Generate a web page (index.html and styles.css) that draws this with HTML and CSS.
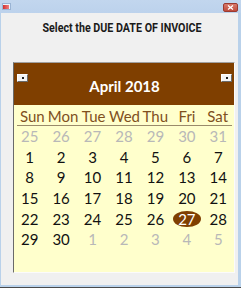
FILE: index.html
```html
<!DOCTYPE html>
<html>
<head>
<meta charset="utf-8">
<link rel="stylesheet" href="styles.css">
</head>
<body>
<div class="window">
  <div class="titlebar">
    <span class="app-icon"><span class="app-icon-bar"></span></span>
    <span class="close-btn"><svg width="7" height="5" viewBox="0 0 7 5"><path d="M1 0.5L6 4.5M6 0.5L1 4.5" stroke="#fff" stroke-width="1.3"/></svg></span>
  </div>
  <div class="client">
    <div class="heading"><span class="heading-text">Select the DUE DATE OF INVOICE</span></div>
    <div class="calendar">
      <div class="cal-head">
        <span class="nav-btn"><span class="nav-dot"></span></span>
        <span class="month">April 2018</span>
        <span class="nav-btn"><span class="nav-dot"></span></span>
      </div>
      <div class="cal-body">
        <div class="dow">
          <span>Sun</span><span>Mon</span><span>Tue</span><span>Wed</span><span>Thu</span><span>Fri</span><span>Sat</span>
        </div>
        <div class="days">
          <span class="other">25</span><span class="other">26</span><span class="other">27</span><span class="other">28</span><span class="other">29</span><span class="other">30</span><span class="other">31</span>
          <span>1</span><span>2</span><span>3</span><span>4</span><span>5</span><span>6</span><span>7</span>
          <span>8</span><span>9</span><span>10</span><span>11</span><span>12</span><span>13</span><span>14</span>
          <span>15</span><span>16</span><span>17</span><span>18</span><span>19</span><span>20</span><span>21</span>
          <span>22</span><span>23</span><span>24</span><span>25</span><span>26</span><span><b class="sel">27</b></span><span>28</span>
          <span>29</span><span>30</span><span class="other">1</span><span class="other">2</span><span class="other">3</span><span class="other">4</span><span class="other">5</span>
        </div>
      </div>
    </div>
  </div>
</div>
</body>
</html>
```

FILE: styles.css
```css
html, body {
  margin: 0;
  padding: 0;
  background: #f0f0f0;
}
.window {
  width: 241px;
  height: 288px;
  box-sizing: border-box;
  display: flex;
  flex-direction: column;
  background: #b9d1ea;
  border-bottom: 1px solid #4a4a4a;
}
.titlebar {
  height: 13px;
  flex: none;
  position: relative;
  background: linear-gradient(#c2d6ee, #bcd2ec);
  display: flex;
  align-items: center;
  justify-content: space-between;
  padding: 0 3px 0 2px;
}
.app-icon {
  width: 9px;
  height: 7px;
  background: #eef3fa;
  border: 1px solid #9ab4d4;
  box-sizing: border-box;
  display: flex;
  align-items: flex-end;
}
.app-icon-bar {
  width: 6px;
  height: 4px;
  background: linear-gradient(90deg, #d03030, #f08080);
}
.close-btn {
  width: 15px;
  height: 9px;
  margin-top: 1px;
  background: linear-gradient(#d87a6c, #c04b3c);
  border: 1px solid #9b3a30;
  border-radius: 2px;
  box-sizing: border-box;
  display: flex;
  align-items: center;
  justify-content: center;
}
.client {
  flex: 1;
  margin: 0 3px 2px 1px;
  background: #f0f0f0;
  display: flex;
  flex-direction: column;
}
.heading {
  font-family: Roboto, "Liberation Sans", sans-serif;
  font-weight: 700;
  font-size: 12.5px;
  color: #1a1a1a;
  text-align: center;
  height: 15px;
  line-height: 15px;
  margin-top: 7px;
  padding-left: 5px;
  white-space: nowrap;
}
.heading-text {
  display: inline-block;
  transform: scaleX(0.855);
}
.calendar {
  margin: 27px 0 0 12px;
  width: 222px;
  height: 211px;
  box-sizing: border-box;
  border-top: 1px solid #a0a0a0;
  border-left: 1px solid #6a6a6a;
  border-right: 1px solid #fbfbfb;
  border-bottom: 1px solid #fbfbfb;
  display: flex;
  flex-direction: column;
  font-family: Lato, "Open Sans", sans-serif;
}
.cal-head {
  height: 42px;
  flex: none;
  background: #7f3f00;
  display: flex;
  align-items: flex-start;
  justify-content: space-between;
  padding: 0 2px 0 3px;
}
.nav-btn {
  margin-top: 11px;
  width: 11px;
  height: 8px;
  box-sizing: border-box;
  background: #f4f4f4;
  border: 1px solid;
  border-color: #ffffff #6a6a6a #6a6a6a #ffffff;
  display: flex;
  align-items: center;
  justify-content: center;
}
.nav-dot {
  width: 2px;
  height: 2px;
  background: #222;
}
.month {
  color: #fff;
  font-weight: 700;
  font-size: 15px;
  line-height: 20px;
  margin-top: 13px;
}
.cal-body {
  flex: 1;
  background: #ffffcc;
  display: flex;
  flex-direction: column;
}
.dow {
  display: grid;
  grid-template-columns: repeat(7, 1fr);
  height: 20px;
  margin: 0 2px 0 3px;
  border-bottom: 1px solid #9a8a6a;
  color: #80501e;
  font-size: 15px;
  line-height: 22px;
  text-align: center;
}
.dow span:nth-child(6), .dow span:nth-child(7) {
  padding-left: 2px;
}
.days {
  display: grid;
  grid-template-columns: repeat(7, 1fr);
  grid-auto-rows: 20.7px;
  margin-top: 0;
  font-size: 15px;
  line-height: 21px;
  text-align: center;
  color: #111;
}
.days span {
  display: flex;
  align-items: center;
  justify-content: center;
}
.days .other {
  color: #b8b8b8;
}
.sel {
  font-weight: 400;
  display: inline-block;
  width: 28px;
  height: 16px;
  line-height: 16px;
  border-radius: 50%;
  background: #7f3f00;
  color: #fff;
}
```
